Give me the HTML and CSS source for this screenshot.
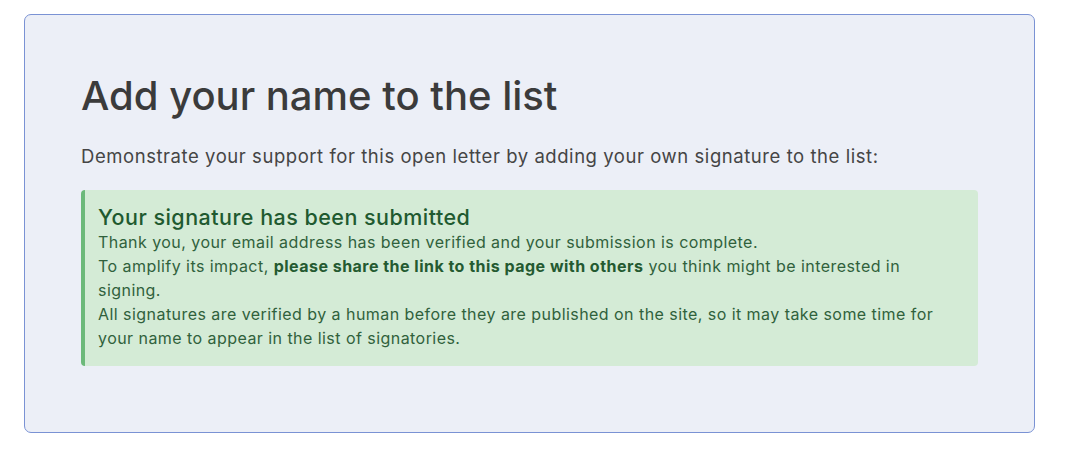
FILE: index.html
```html
<!DOCTYPE html>
<html>
<head>
<meta charset="utf-8">
<link rel="stylesheet" href="styles.css">
</head>
<body>
<section class="card">
  <h2 class="title">Add your name to the list</h2>
  <p class="lead">Demonstrate your support for this open letter by adding your own signature to the list:</p>
  <div class="alert">
    <h3 class="alert-title">Your signature has been submitted</h3>
    <p class="alert-text">Thank you, your email address has been verified and your submission is complete.<br>
    To amplify its impact, <strong>please share the link to this page with others</strong> you think might be interested in signing.<br>
    All signatures are verified by a human before they are published on the site, so it may take some time for your name to appear in the list of signatories.</p>
  </div>
</section>
</body>
</html>
```
FILE: styles.css
```css
html, body {
  margin: 0;
  padding: 0;
  background: #ffffff;
}
body {
  font-family: Inter, "Noto Sans", sans-serif;
  padding: 14px 0 0 24px;
}
.card {
  box-sizing: border-box;
  width: 1011px;
  height: 419px;
  background: #eceff7;
  border: 1px solid #7a92d4;
  border-radius: 7px;
  padding: 56px 56px 40px 56px;
}
.title {
  margin: 0;
  font-size: 40px;
  font-weight: 500;
  color: #3b3b3b;
  line-height: 50px;
}
.lead {
  margin: 22px 0 0 0;
  font-size: 18.5px;
  letter-spacing: 0.03em;
  line-height: 26px;
  color: #454545;
}
.alert {
  margin-top: 21px;
  background: #d4ebd6;
  border-left: 4px solid #6cb97a;
  border-radius: 4px;
  padding: 14px 35px 16px 13px;
}
.alert-title {
  margin: 0;
  font-size: 21.5px;
  letter-spacing: 0.022em;
  font-weight: 500;
  color: #1f5a30;
  line-height: 26px;
}
.alert-text {
  margin: 0;
  font-size: 16px;
  letter-spacing: 0.028em;
  line-height: 24px;
  color: #30613c;
}
.alert-text strong {
  font-weight: 700;
  letter-spacing: 0.03em;
  color: #245a31;
}
```
